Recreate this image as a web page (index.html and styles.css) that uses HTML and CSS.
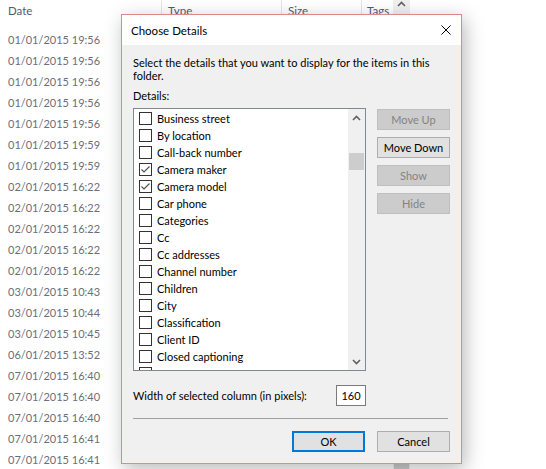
FILE: index.html
```html
<!DOCTYPE html>
<html>
<head>
<meta charset="utf-8">
<link rel="stylesheet" href="styles.css">
</head>
<body>
<div class="explorer">
  <div class="pane">
    <div class="header">
      <div class="col col-date">Date</div>
      <div class="col col-type">Type</div>
      <div class="col col-size">Size</div>
      <div class="col col-tags">Tags</div>
    </div>
    <div class="rows">
      <div class="row">01/01/2015 19:56</div>
      <div class="row">01/01/2015 19:56</div>
      <div class="row">01/01/2015 19:56</div>
      <div class="row">01/01/2015 19:56</div>
      <div class="row">01/01/2015 19:56</div>
      <div class="row">01/01/2015 19:59</div>
      <div class="row">01/01/2015 19:59</div>
      <div class="row">02/01/2015 16:22</div>
      <div class="row">02/01/2015 16:22</div>
      <div class="row">02/01/2015 16:22</div>
      <div class="row">02/01/2015 16:22</div>
      <div class="row">02/01/2015 16:22</div>
      <div class="row">03/01/2015 10:43</div>
      <div class="row">03/01/2015 10:44</div>
      <div class="row">03/01/2015 10:45</div>
      <div class="row">06/01/2015 13:52</div>
      <div class="row">07/01/2015 16:40</div>
      <div class="row">07/01/2015 16:40</div>
      <div class="row">07/01/2015 16:40</div>
      <div class="row">07/01/2015 16:41</div>
      <div class="row">07/01/2015 16:41</div>
    </div>
  </div>
  <div class="vscroll">
    <div class="vs-up">
      <svg width="9" height="6" viewBox="0 0 9 6"><polyline points="1,5 4.5,1.5 8,5" fill="none" stroke="#606060" stroke-width="1.6"/></svg>
    </div>
    <div class="vs-thumb"></div>
  </div>
</div>

<div class="dialog">
  <div class="titlebar">
    <span class="title">Choose Details</span>
    <svg class="close" width="10" height="10" viewBox="0 0 10 10"><path d="M0.5,0.5 L9.5,9.5 M9.5,0.5 L0.5,9.5" stroke="#000" stroke-width="1" fill="none"/></svg>
  </div>
  <div class="dbody">
    <div class="intro">Select the details that you want to display for the items in this folder.</div>
    <div class="label">Details:</div>
    <div class="main">
      <div class="listbox">
        <div class="items">
          <div class="item"><span class="cb"></span>Business street</div>
          <div class="item"><span class="cb"></span>By location</div>
          <div class="item"><span class="cb"></span>Call-back number</div>
          <div class="item"><span class="cb"><svg width="11" height="11" viewBox="0 0 11 11"><polyline points="1.5,5.5 4,8 9.5,2.5" fill="none" stroke="#4d4d4d" stroke-width="1.1"/></svg></span>Camera maker</div>
          <div class="item"><span class="cb"><svg width="11" height="11" viewBox="0 0 11 11"><polyline points="1.5,5.5 4,8 9.5,2.5" fill="none" stroke="#4d4d4d" stroke-width="1.1"/></svg></span>Camera model</div>
          <div class="item"><span class="cb"></span>Car phone</div>
          <div class="item"><span class="cb"></span>Categories</div>
          <div class="item"><span class="cb"></span>Cc</div>
          <div class="item"><span class="cb"></span>Cc addresses</div>
          <div class="item"><span class="cb"></span>Channel number</div>
          <div class="item"><span class="cb"></span>Children</div>
          <div class="item"><span class="cb"></span>City</div>
          <div class="item"><span class="cb"></span>Classification</div>
          <div class="item"><span class="cb"></span>Client ID</div>
          <div class="item"><span class="cb"></span>Closed captioning</div>
          <div class="item"><span class="cb"></span></div>
        </div>
        <div class="lscroll">
          <div class="ls-btn">
            <svg width="9" height="6" viewBox="0 0 9 6"><polyline points="1,5 4.5,1.5 8,5" fill="none" stroke="#606060" stroke-width="1.6"/></svg>
          </div>
          <div class="ls-thumb"></div>
          <div class="ls-fill"></div>
          <div class="ls-btn">
            <svg width="9" height="6" viewBox="0 0 9 6"><polyline points="1,1 4.5,4.5 8,1" fill="none" stroke="#606060" stroke-width="1.6"/></svg>
          </div>
        </div>
      </div>
      <div class="side">
        <div class="btn disabled">Move Up</div>
        <div class="btn">Move Down</div>
        <div class="btn disabled">Show</div>
        <div class="btn disabled">Hide</div>
      </div>
    </div>
    <div class="widthrow">
      <span>Width of selected column (in pixels):</span>
      <div class="numbox">160</div>
    </div>
    <div class="sep"></div>
    <div class="footer">
      <div class="btn default">OK</div>
      <div class="btn">Cancel</div>
    </div>
  </div>
</div>
</body>
</html>
```

FILE: styles.css
```css
html, body {
  margin: 0;
  padding: 0;
}
body {
  width: 546px;
  height: 469px;
  overflow: hidden;
  background: #fff;
  font-family: Lato, "Noto Sans", sans-serif;
  font-size: 11px;
  position: relative;
}

/* explorer background */
.explorer {
  display: flex;
  width: 410px;
  height: 469px;
}
.pane {
  width: 393px;
  display: flex;
  flex-direction: column;
}
.header {
  display: flex;
  height: 22px;
}
.col {
  box-sizing: border-box;
  height: 22px;
  line-height: 22px;
  font-size: 11.5px;
  color: #4c5d75;
  border-right: 1px solid #e5e5e5;
  padding-left: 6px;
}
.col-date { width: 162px; padding-left: 8px; }
.col-type { width: 120px; }
.col-size { width: 80px; }
.col-tags { width: 31px; border-right: none; padding-left: 5px; }
.rows {
  padding-top: 7px;
}
.row {
  height: 21px;
  line-height: 21px;
  padding-left: 8px;
  color: #6d6d7a;
}
.vscroll {
  width: 17px;
  background: #f0f0f0;
  display: flex;
  flex-direction: column;
}
.vs-up {
  height: 17px;
  display: flex;
  align-items: center;
  justify-content: center;
}
.vs-thumb {
  margin: 448px 1px 0 1px;
  height: 30px;
  background: #cdcdcd;
}

/* dialog */
.dialog {
  position: absolute;
  left: 121px;
  top: 14px;
  width: 339px;
  height: 448px;
  border: 1px solid #d98a8a;
  background: #f0f0f0;
  box-shadow: 3px 5px 18px rgba(0, 0, 0, 0.28);
  display: flex;
  flex-direction: column;
  color: #000;
}
.titlebar {
  height: 30px;
  background: #fff;
  display: flex;
  align-items: center;
  justify-content: space-between;
  padding: 0 10px 0 9px;
}
.title {
  font-size: 11.5px;
}
.dbody {
  flex: 1;
  display: flex;
  flex-direction: column;
  padding: 11px 11px 0 11px;
}
.intro {
  line-height: 13px;
}
.label {
  margin-top: 7px;
  line-height: 13px;
}
.main {
  margin-top: 6px;
  display: flex;
  gap: 11px;
}
.listbox {
  box-sizing: border-box;
  width: 233px;
  height: 263px;
  border: 1px solid #828790;
  background: #fff;
  display: flex;
  overflow: hidden;
}
.items {
  flex: 1;
  padding: 1px 0 0 5px;
  overflow: hidden;
}
.item {
  height: 17px;
  display: flex;
  align-items: center;
  white-space: nowrap;
}
.cb {
  box-sizing: border-box;
  width: 13px;
  height: 13px;
  border: 1px solid #333;
  background: #fff;
  margin-right: 5px;
  flex: none;
  display: flex;
}
.lscroll {
  width: 17px;
  background: #f0f0f0;
  display: flex;
  flex-direction: column;
}
.ls-btn {
  height: 17px;
  display: flex;
  align-items: center;
  justify-content: center;
  flex: none;
}
.ls-thumb {
  margin: 27px 1px 0 1px;
  height: 17px;
  background: #cdcdcd;
  flex: none;
}
.ls-fill {
  flex: 1;
}
.side {
  display: flex;
  flex-direction: column;
  gap: 7px;
  padding-top: 1px;
}
.btn {
  box-sizing: border-box;
  width: 73px;
  height: 21px;
  border: 1px solid #adadad;
  background: #e1e1e1;
  display: flex;
  align-items: center;
  justify-content: center;
  white-space: nowrap;
}
.btn.disabled {
  background: #cccccc;
  border-color: #bfbfbf;
  color: #838383;
}
.btn.default {
  border: 2px solid #0078d7;
}
.widthrow {
  width: 233px;
  margin-top: 14px;
  display: flex;
  align-items: center;
  justify-content: space-between;
}
.numbox {
  box-sizing: border-box;
  width: 30px;
  height: 21px;
  border: 1px solid #7a7a7a;
  background: #fff;
  display: flex;
  align-items: center;
  justify-content: center;
}
.sep {
  margin-top: 12px;
  margin-right: 2px;
  height: 1px;
  background: #a0a0a0;
}
.footer {
  margin-top: 12px;
  display: flex;
  justify-content: flex-end;
  gap: 12px;
}
```
